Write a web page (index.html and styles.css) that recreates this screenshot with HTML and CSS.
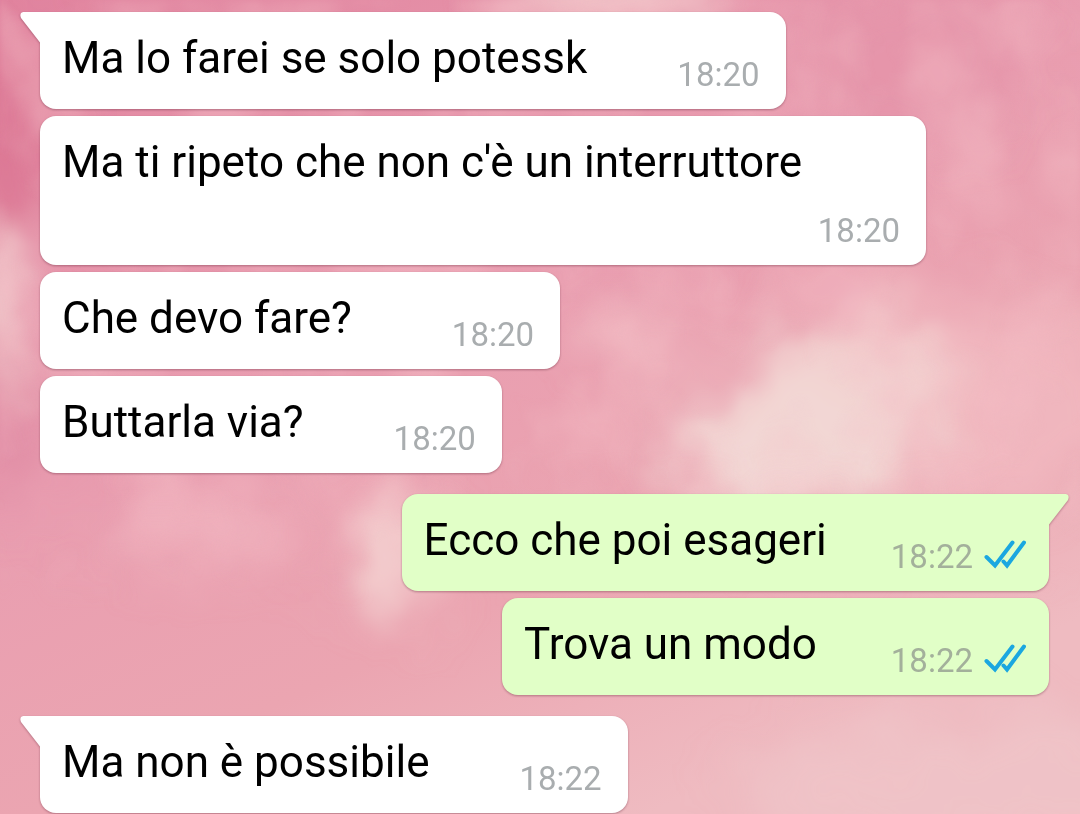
FILE: index.html
```
<!DOCTYPE html>
<html lang="it">
<head>
    <meta charset="UTF-8">
    <meta name="viewport" content="width=device-width, initial-scale=1.0">
    <title>Chat</title>
    <link rel="stylesheet" href="styles.css">
</head>
<body>
    <svg class="wallpaper" viewBox="0 0 1080 814" preserveAspectRatio="none" aria-hidden="true">
        <defs>
            <linearGradient id="sky" x1="0" y1="0" x2="0.6" y2="1">
                <stop offset="0" stop-color="#e1849f"/>
                <stop offset="0.45" stop-color="#e99db0"/>
                <stop offset="0.75" stop-color="#eba5b1"/>
                <stop offset="1" stop-color="#efbbc1"/>
            </linearGradient>
            <filter id="cloud" filterUnits="userSpaceOnUse" x="-100" y="-100" width="1280" height="1014">
                <feTurbulence type="fractalNoise" baseFrequency="0.014" numOctaves="4" seed="7" result="noise"/>
                <feGaussianBlur in="SourceGraphic" stdDeviation="24" result="soft"/>
                <feDisplacementMap in="soft" in2="noise" scale="80" xChannelSelector="R" yChannelSelector="G"/>
                <feGaussianBlur stdDeviation="4"/>
            </filter>
            <filter id="haze" x="0" y="0" width="100%" height="100%" color-interpolation-filters="sRGB">
                <feTurbulence type="fractalNoise" baseFrequency="0.011 0.009" numOctaves="4" seed="12"/>
                <feColorMatrix values="0 0 0 0 0.96  0 0 0 0 0.75  0 0 0 0 0.78  3 0 0 0 -1.2"/>
                <feGaussianBlur stdDeviation="3"/>
            </filter>
            <linearGradient id="fade" x1="0" y1="0" x2="0" y2="1">
                <stop offset="0.55" stop-color="#fff"/>
                <stop offset="0.75" stop-color="#000"/>
            </linearGradient>
            <mask id="upper"><rect width="1080" height="814" fill="url(#fade)"/></mask>
        </defs>
        <rect width="1080" height="814" fill="url(#sky)"/>
        <g filter="url(#cloud)">
            <ellipse cx="15" cy="130" rx="50" ry="100" fill="#d8708f" opacity="0.7"/>
            <ellipse cx="5" cy="300" rx="26" ry="75" fill="#f3d0d0"/>
            <ellipse cx="10" cy="440" rx="50" ry="70" fill="#df8ba3" opacity="0.6"/>
            <ellipse cx="610" cy="0" rx="120" ry="24" fill="#f5d5d3"/>
            <ellipse cx="910" cy="60" rx="110" ry="80" fill="#e594a9" opacity="0.8"/>
            <ellipse cx="940" cy="400" rx="200" ry="110" fill="#f1b9c0" opacity="0.8"/>
            <ellipse cx="850" cy="380" rx="110" ry="60" fill="#f2d2d0"/>
            <ellipse cx="790" cy="450" rx="130" ry="65" fill="#f2d7d4"/>
            <ellipse cx="640" cy="345" rx="60" ry="30" fill="#f3bfc6" opacity="0.8"/>
            <ellipse cx="400" cy="560" rx="44" ry="60" fill="#f3cdce"/>
            <ellipse cx="205" cy="530" rx="90" ry="40" fill="#f1b4bf" opacity="0.7"/>
            <ellipse cx="1000" cy="790" rx="260" ry="70" fill="#efc4c8" opacity="0.8"/>
        </g>
        <g mask="url(#upper)"><rect width="1080" height="814" filter="url(#haze)" opacity="0.4"/></g>
    </svg>

    <main class="chat">
        <div class="message incoming tail">
            <svg class="corner" viewBox="0 0 21 32" aria-hidden="true"><path d="M21 0H3Q-1 1 1 6L20 30.500L21 32Z"/></svg>
            <p class="text">Ma lo farei se solo potessk</p>
            <div class="info"><time>18:20</time></div>
        </div>
        <div class="message incoming">
            <p class="text">Ma ti ripeto che non c'è un interruttore</p>
            <div class="info"><time>18:20</time></div>
        </div>
        <div class="message incoming wide">
            <p class="text">Che devo fare?</p>
            <div class="info"><time>18:20</time></div>
        </div>
        <div class="message incoming">
            <p class="text">Buttarla via?</p>
            <div class="info"><time>18:20</time></div>
        </div>
        <div class="message outgoing tail">
            <svg class="corner" viewBox="0 0 21 32" aria-hidden="true"><path d="M0 0H18Q22 1 20 6L1 30.500L0 32Z"/></svg>
            <p class="text">Ecco che poi esageri</p>
            <div class="info">
                <time>18:22</time>
                <svg class="ticks" viewBox="0 0 42 34" role="img" aria-label="Letto"><path d="M2.500 17L11 25.500L28.500 2.500M19.500 21.500L23 25.500L40 2.500"/></svg>
            </div>
        </div>
        <div class="message outgoing wide">
            <p class="text">Trova un modo</p>
            <div class="info">
                <time>18:22</time>
                <svg class="ticks" viewBox="0 0 42 34" role="img" aria-label="Letto"><path d="M2.500 17L11 25.500L28.500 2.500M19.500 21.500L23 25.500L40 2.500"/></svg>
            </div>
        </div>
        <div class="message incoming tail">
            <svg class="corner" viewBox="0 0 21 32" aria-hidden="true"><path d="M21 0H3Q-1 1 1 6L20 30.500L21 32Z"/></svg>
            <p class="text">Ma non è possibile</p>
            <div class="info"><time>18:22</time></div>
        </div>
    </main>
</body>
</html>
```
FILE: styles.css
```
body {
    margin: 0;
    background: #eaa0b0;
    font-family: Roboto, "Liberation Sans", sans-serif;
}
.wallpaper {
    position: fixed;
    top: 0;
    left: 0;
    width: 100%;
    height: 100%;
}
.chat {
    position: relative;
    display: flex;
    flex-direction: column;
    gap: 7px;
    padding: 12px 31px 1px 40px;
}
.message {
    position: relative;
    display: flex;
    flex-wrap: wrap;
    align-items: flex-end;
    box-sizing: border-box;
    max-width: calc(100% - 123px);
    border-radius: 16px;
    filter: drop-shadow(0 1px 1px rgba(90, 30, 50, 0.4));
}
.incoming {
    align-self: flex-start;
    column-gap: 90px;
    padding: 20px 26px 8px 22px;
    background: #fff;
    fill: #fff;
}
.outgoing {
    align-self: flex-end;
    column-gap: 64px;
    padding: 20px 23px 8px 22px;
    background: #e1ffc7;
    fill: #e1ffc7;
}
/* first message of a group */
.tail:not(:first-child) {
    margin-top: 14px;
}
.incoming.tail {
    border-top-left-radius: 0;
}
.outgoing.tail {
    border-top-right-radius: 0;
}
.corner {
    position: absolute;
    top: 0;
    width: 21px;
    height: 32px;
}
.incoming .corner {
    left: -20px;
}
.outgoing .corner {
    right: -20px;
}
.text {
    margin: 0;
    padding-bottom: 17px;
    font-size: 44px;
    line-height: 52px;
    color: #000;
}
.wide .text {
    padding-right: 10px;
}
.info {
    display: flex;
    align-items: center;
    gap: 11px;
    margin-left: auto;
    font-size: 33px;
    line-height: 52px;
    color: #a9adaf;
}
.outgoing .info {
    color: #a3b09b;
}
.ticks {
    width: 42px;
    height: 34px;
    fill: none;
    stroke: #1ba7e0;
    stroke-width: 4;
    stroke-linecap: round;
}
```
